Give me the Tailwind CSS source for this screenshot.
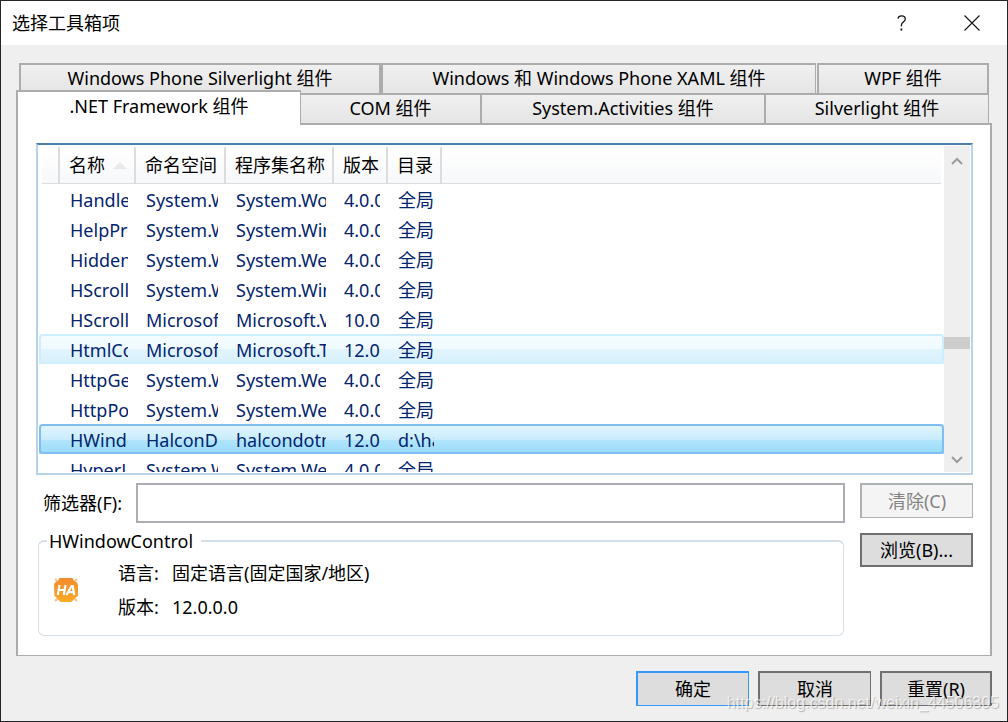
<!DOCTYPE html>
<html lang="zh-CN">
<head>
<meta charset="utf-8">
<title>选择工具箱项</title>
<script src="https://cdn.jsdelivr.net/npm/@tailwindcss/browser@4"></script>
</head>
<body class="relative flex h-screen flex-col overflow-hidden border border-[#252527] bg-[#efefef] font-['Noto_Sans','Noto_Sans_CJK_SC',sans-serif] text-[18px] leading-6 text-black">
  <header class="flex h-11 shrink-0 items-center bg-white pl-[11px]">
    <h1 class="flex-1">选择工具箱项</h1>
    <button type="button" aria-label="帮助" class="flex h-11 w-[70px] items-center justify-center">
      <svg width="10" height="16" viewBox="0 0 10 16" fill="none" stroke="#111" stroke-width="1.3"><path d="M1 3.5C1.4 1.6 2.8.8 4.5.8c2.2 0 3.8 1.2 3.8 3.1C8.300 6.700 4.400 7.300 4.400 10v1.200"/><path d="M4.400 13.500v2" stroke-width="1.800"/></svg>
    </button>
    <button type="button" aria-label="关闭" class="flex h-11 w-[70px] items-center justify-center">
      <svg width="16" height="16" viewBox="0 0 16 16" fill="none" stroke="#111" stroke-width="1.1"><path d="M.5.5l15 15M15.500.5l-15 15"/></svg>
    </button>
  </header>

  <main class="flex min-h-0 flex-1 flex-col px-[15px] pt-[18px] pb-[15px]">
    <div role="tablist" class="shrink-0">
      <div class="mr-[3px] ml-[3px] grid h-[30px] grid-cols-[362fr_436fr_172fr]">
        <button type="button" role="tab" class="border-2 border-b-0 border-[#acacac] bg-linear-to-b from-[#f0f0f0] to-[#e5e5e5] pb-0.5">Windows Phone Silverlight 组件</button>
        <button type="button" role="tab" class="mr-px border-2 border-r border-b-0 border-[#acacac] bg-linear-to-b from-[#f0f0f0] to-[#e5e5e5] pb-0.5">Windows 和 Windows Phone XAML 组件</button>
        <button type="button" role="tab" class="border-2 border-b-0 border-[#acacac] bg-linear-to-b from-[#f0f0f0] to-[#e5e5e5] pb-0.5">WPF 组件</button>
      </div>
      <div class="mr-[3px] grid h-[30px] grid-cols-[285fr_181fr_284fr_223fr]">
        <button type="button" role="tab" aria-selected="true" class="relative z-10 -mt-[3px] -mb-0.5 border-2 border-r border-b-0 border-[#acacac] bg-white pb-1.5">.NET Framework 组件</button>
        <button type="button" role="tab" class="border-t-2 border-r-2 border-[#acacac] bg-linear-to-b from-[#f0f0f0] to-[#e5e5e5] pb-0.5">COM 组件</button>
        <button type="button" role="tab" class="border-t-2 border-r-2 border-[#acacac] bg-linear-to-b from-[#f0f0f0] to-[#e5e5e5] pb-0.5">System.Activities 组件</button>
        <button type="button" role="tab" class="border-t-2 border-r border-[#acacac] bg-linear-to-b from-[#f0f0f0] to-[#e5e5e5] pb-0.5">Silverlight 组件</button>
      </div>
    </div>

    <section role="tabpanel" class="flex min-h-0 flex-1 flex-col border-2 border-b border-[#acacac] bg-white pt-[18px] pr-[17px] pb-[19px] pl-[18px]">
      <div class="flex min-h-0 flex-1 border-2 border-[#b8d3e8] border-t-[#4a7fad] p-px">
        <div class="min-h-0 min-w-0 flex-1 overflow-hidden pt-px">
          <table class="w-full table-fixed border-separate border-spacing-0 text-left text-[#04246f]">
            <colgroup>
              <col class="w-[21px]"><col class="w-[76px]"><col class="w-[90px]"><col class="w-[108px]"><col class="w-[54px]"><col class="w-[54px]"><col>
            </colgroup>
            <thead class="text-black">
              <tr class="h-[37px]">
                <th class="p-0 font-normal"><div class="ml-[3px] h-[37px] border-r-2 border-b border-[#dcdcdc] bg-linear-to-b from-white to-[#f7f8fa]"></div></th>
                <th class="p-0 font-normal"><div class="flex h-[37px] items-center gap-2 border-r-2 border-b border-[#dcdcdc] bg-linear-to-b from-white to-[#f7f8fa] pl-[9px]"><span class="whitespace-nowrap">名称</span><svg width="14" height="7" viewBox="0 0 14 7"><path d="M7 0l7 7H0z" fill="#e9e9e9"/></svg></div></th>
                <th class="p-0 font-normal"><div class="flex h-[37px] items-center border-r-2 border-b border-[#dcdcdc] bg-linear-to-b from-white to-[#f7f8fa] pl-[9px] whitespace-nowrap">命名空间</div></th>
                <th class="p-0 font-normal"><div class="flex h-[37px] items-center border-r-2 border-b border-[#dcdcdc] bg-linear-to-b from-white to-[#f7f8fa] pl-[9px] whitespace-nowrap">程序集名称</div></th>
                <th class="p-0 font-normal"><div class="flex h-[37px] items-center border-r-2 border-b border-[#dcdcdc] bg-linear-to-b from-white to-[#f7f8fa] pl-[9px] whitespace-nowrap">版本</div></th>
                <th class="p-0 font-normal"><div class="flex h-[37px] items-center border-r-2 border-b border-[#dcdcdc] bg-linear-to-b from-white to-[#f7f8fa] pl-[9px] whitespace-nowrap">目录</div></th>
                <th class="p-0 font-normal"><div class="mr-[3px] h-[37px] border-b border-[#dcdcdc] bg-linear-to-b from-white to-[#f7f8fa]"></div></th>
              </tr>
            </thead>
            <tbody id="rows"></tbody>
          </table>
        </div>
        <div class="flex w-[26px] shrink-0 flex-col items-center bg-[#efefef]">
          <button type="button" aria-label="向上滚动" class="flex h-[29px] w-full items-center justify-center"><svg width="12" height="8" viewBox="0 0 12 8" fill="none" stroke="#9b9b9b" stroke-width="2"><path d="M1 7l5-5 5 5"/></svg></button>
          <div class="grow-[162]"></div>
          <div class="h-3 w-full bg-[#cdcdcd]"></div>
          <div class="grow-[99]"></div>
          <button type="button" aria-label="向下滚动" class="flex h-6 w-full items-center justify-center"><svg width="12" height="8" viewBox="0 0 12 8" fill="none" stroke="#9b9b9b" stroke-width="2"><path d="M1 1l5 5 5-5"/></svg></button>
        </div>
      </div>

      <div class="mt-2 flex shrink-0 gap-[15px]">
        <div class="min-w-0 flex-1">
          <div class="flex h-10 items-center pl-[7px]">
            <label for="filter" class="w-[93px] shrink-0 whitespace-nowrap">筛选器(F):</label>
            <input id="filter" type="text" class="h-10 min-w-0 flex-1 border-2 border-[#abadb3] bg-white px-2 outline-none">
          </div>
          <fieldset class="mt-1.5 mr-px ml-0.5 h-[107px] rounded-md border border-t-2 border-[#d5dfe7] pl-[15px]">
            <legend class="-ml-[7px] pr-2 pl-0.5">HWindowControl</legend>
            <div class="flex items-center gap-10 pt-2">
              <svg width="24" height="24" viewBox="0 0 24 24" class="shrink-0">
                <defs><linearGradient id="g" x2="0" y2="1"><stop stop-color="#f58a2e"/><stop offset="1" stop-color="#f9aa25"/></linearGradient></defs>
                <path d="M1 1l22 22M23 1L1 23" stroke="#f8c38c" stroke-width="2"/>
                <path d="M5.500 0h13L20 3l3 1.500L24 7v11l-3 2-2 2.500-2 1.500H7l-2.500-2L3 20l-2.500-2L0 7l1-2.500L4 3z" fill="url(#g)"/>
                <path d="M5.500 7L3.800 17M11.500 7L9.800 17M4.700 12h6M12.500 17l5-9h1.200l1.600 9M14.500 14.200h5" fill="none" stroke="#fff" stroke-width="2.200"/>
              </svg>
              <dl class="grid grid-cols-[54px_1fr] gap-y-[10px]">
                <dt>语言:</dt><dd>固定语言(固定国家/地区)</dd>
                <dt>版本:</dt><dd>12.0.0.0</dd>
              </dl>
            </div>
          </fieldset>
        </div>
        <div class="flex w-[113px] shrink-0 flex-col gap-[15px]">
          <button type="button" disabled class="h-[35px] border-2 border-r border-b border-[#adb2b5] bg-[#f4f4f4] text-[#838383]">清除(C)</button>
          <button type="button" class="h-[34px] border-2 border-[#707070] bg-[#dddddd]">浏览(B)...</button>
        </div>
      </div>
    </section>

    <footer class="mt-[15px] flex shrink-0 justify-end gap-[9px]">
      <button type="button" class="h-[35px] w-[113px] border-2 border-r border-b border-[#3399ff] bg-[#dddddd]">确定</button>
      <button type="button" class="h-[35px] w-[113px] border-2 border-r border-b border-[#707070] bg-[#dddddd]">取消</button>
      <button type="button" class="h-[35px] w-28 border-2 border-b border-[#707070] bg-[#dddddd]">重置(R)</button>
    </footer>
  </main>

  <p class="pointer-events-none absolute right-2 bottom-1.5 font-['Liberation_Sans',sans-serif] text-[16px] leading-6 text-white/70 text-shadow-[1px_1px_1px_rgb(0_0_0/0.25)]">https://blog.csdn.net/weixin_44506305</p>

  <script>
    const rows = [
      ['HandleError', 'System.Workflow', 'System.Workflow', '4.0.0.0', '全局'],
      ['HelpProvider', 'System.Windows', 'System.Windows', '4.0.0.0', '全局'],
      ['HiddenField', 'System.Web', 'System.Web', '4.0.0.0', '全局'],
      ['HScrollBar', 'System.Windows', 'System.Windows', '4.0.0.0', '全局'],
      ['HScrollBar', 'Microsoft.Visual', 'Microsoft.Visual', '10.0.0.0', '全局'],
      ['HtmlControl', 'Microsoft.Team', 'Microsoft.Team', '12.0.0.0', '全局', 'hot'],
      ['HttpGetClient', 'System.Web', 'System.Web', '4.0.0.0', '全局'],
      ['HttpPostClient', 'System.Web', 'System.Web', '4.0.0.0', '全局'],
      ['HWindowControl', 'HalconDotNet', 'halcondotnet', '12.0.0.0', 'd:\\halcon', 'selected'],
      ['HyperLink', 'System.Web', 'System.Web', '4.0.0.0', '全局'],
    ];
    const look = {
      hot: 'h-[30px] rounded-[4px] bg-[linear-gradient(#f5fcff_0%,#effaff_50%,#e2f5fe_50%,#d6f0fd_100%)] inset-ring-2 inset-ring-[#cdeeff]',
      selected: 'h-[30px] rounded-[4px] bg-[linear-gradient(#e3f6fe_0%,#c8ecfc_52%,#b2e5fc_52%,#98dcfa_100%)] inset-ring-2 inset-ring-[#80bdf2]',
    };
    const body = document.getElementById('rows');
    for (const [name, ns, assembly, version, folder, state] of rows) {
      const tr = document.createElement('tr');
      tr.className = look[state] || 'h-[30px]';
      tr.append(document.createElement('td'));
      for (const text of [name, ns, assembly, version, folder]) {
        const td = document.createElement('td');
        td.className = 'p-0 pt-0.5 pl-[10px] pr-2';
        const clip = document.createElement('div');
        clip.className = 'overflow-hidden whitespace-nowrap';
        clip.textContent = text;
        td.append(clip);
        tr.append(td);
      }
      tr.append(document.createElement('td'));
      body.append(tr);
    }
  </script>
</body>
</html>
